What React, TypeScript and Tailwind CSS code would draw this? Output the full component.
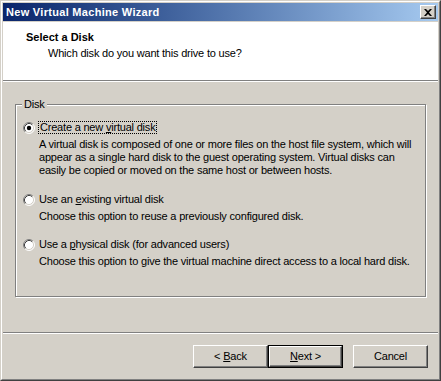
import React from 'react';

const font = { fontFamily: '"Liberation Sans", Arial, sans-serif' };

const Radio: React.FC<{ checked?: boolean }> = ({ checked }) => (
  <svg width="12" height="12" viewBox="0 0 12 12" className="shrink-0">
    <circle cx="6" cy="6" r="5" fill="#ffffff" />
    <path d="M2.11 9.89 A5.5 5.5 0 0 1 9.89 2.11" fill="none" stroke="#808080" strokeWidth="1" />
    <path d="M2.11 9.89 A5.5 5.5 0 0 0 9.89 2.11" fill="none" stroke="#ffffff" strokeWidth="1" />
    <path d="M2.82 9.18 A4.5 4.5 0 0 1 9.18 2.82" fill="none" stroke="#404040" strokeWidth="1" />
    <path d="M2.82 9.18 A4.5 4.5 0 0 0 9.18 2.82" fill="none" stroke="#d4d0c8" strokeWidth="1" />
    {checked && <circle cx="6" cy="6" r="2.2" fill="#000000" />}
  </svg>
);

const Option: React.FC<{
  label: React.ReactNode;
  lines: string[];
  checked?: boolean;
  focused?: boolean;
  className?: string;
}> = ({ label, lines, checked, focused, className }) => (
  <div className={className}>
    <div className="flex items-center h-[13px]">
      <div className="w-[17px] pl-[1px]">
        <Radio checked={checked} />
      </div>
      <span
        className={
          focused
            ? 'leading-[11px] border border-dotted border-black px-px -ml-px'
            : 'leading-[13px]'
        }
      >
        {label}
      </span>
    </div>
    <div className="mt-[4px] pl-[17px] leading-[13px]">
      {lines.map((l) => (
        <div key={l} className="whitespace-nowrap">
          {l}
        </div>
      ))}
    </div>
  </div>
);

const Button: React.FC<{ children: React.ReactNode; isDefault?: boolean }> = ({ children, isDefault }) =>
  isDefault ? (
    <div className="w-[75px] h-[23px] border border-black">
      <div className="h-full border border-t-white border-l-white border-r-[#404040] border-b-[#404040] shadow-[inset_-1px_-1px_0_#808080] flex items-center justify-center">
        <span className="whitespace-pre">{children}</span>
      </div>
    </div>
  ) : (
    <div className="w-[75px] h-[23px] border border-t-white border-l-white border-r-[#404040] border-b-[#404040] shadow-[inset_-1px_-1px_0_#808080] flex items-center justify-center">
      <span className="whitespace-pre">{children}</span>
    </div>
  );

export default function App() {
  return (
    <div style={font} className="w-[441px] h-[381px] text-[11px] tracking-[-0.2px] text-black bg-[#d4d0c8] border border-t-[#d4d0c8] border-l-[#d4d0c8] border-r-[#404040] border-b-[#404040]">
      <div className="h-full border border-t-white border-l-white border-r-[#808080] border-b-[#808080] p-px flex flex-col">
        {/* title bar */}
        <div className="h-[18px] shrink-0 bg-linear-to-r from-[#0a246a] to-[#a6caf0] flex items-center justify-between pl-[3px] pr-[2px]">
          <span className="text-white font-bold text-[11px] tracking-[0.3px] leading-[13px]">New Virtual Machine Wizard</span>
          <div className="w-[16px] h-[14px] bg-[#d4d0c8] border border-t-white border-l-white border-r-[#404040] border-b-[#404040] shadow-[inset_-1px_-1px_0_#808080] flex items-center justify-center">
            <svg width="8" height="7" viewBox="0 0 8 7">
              <path d="M0 0h2l2 2 2-2h2L5 3.5 8 7H6L4 5 2 7H0l3-3.5z" fill="#000000" />
            </svg>
          </div>
        </div>

        {/* header */}
        <div className="mt-px h-[58px] shrink-0 bg-white pt-[9px]">
          <div className="pl-[23px] font-bold leading-[13px] tracking-normal">Select a Disk</div>
          <div className="pl-[45px] mt-[3px] leading-[13px]">Which disk do you want this drive to use?</div>
        </div>
        <div className="h-px bg-[#808080] shrink-0" />
        <div className="h-px bg-white shrink-0" />

        {/* body */}
        <div className="flex-1 flex flex-col">
          <div className="mt-[22px] ml-[12px] w-[411px] h-[193px] relative border border-[#808080] shadow-[inset_1px_1px_0_#ffffff,1px_1px_0_#ffffff]">
            <span className="absolute -top-[7px] left-[6px] px-[2px] bg-[#d4d0c8] leading-[13px]">Disk</span>
            <div className="pl-[6px] pt-[16px]">
              <Option
                checked
                focused
                label={
                  <>
                    Create a new <u>v</u>irtual disk
                  </>
                }
                lines={[
                  'A virtual disk is composed of one or more files on the host file system, which will',
                  'appear as a single hard disk to the guest operating system. Virtual disks can',
                  'easily be copied or moved on the same host or between hosts.',
                ]}
              />
              <Option
                className="mt-[16px]"
                label={
                  <>
                    Use an <u>e</u>xisting virtual disk
                  </>
                }
                lines={['Choose this option to reuse a previously configured disk.']}
              />
              <Option
                className="mt-[15px]"
                label={
                  <>
                    Use a <u>p</u>hysical disk (for advanced users)
                  </>
                }
                lines={['Choose this option to give the virtual machine direct access to a local hard disk.']}
              />
            </div>
          </div>

          <div className="mt-[35px] h-px bg-[#808080]" />
          <div className="h-px bg-white" />

          <div className="mt-[11px] flex justify-end pr-[10px]">
            <Button>
              {'< '}
              <u>B</u>ack
            </Button>
            <Button isDefault>
              <u>N</u>ext {'>'}
            </Button>
            <div className="w-[10px]" />
            <Button>Cancel</Button>
          </div>
        </div>
      </div>
    </div>
  );
}
